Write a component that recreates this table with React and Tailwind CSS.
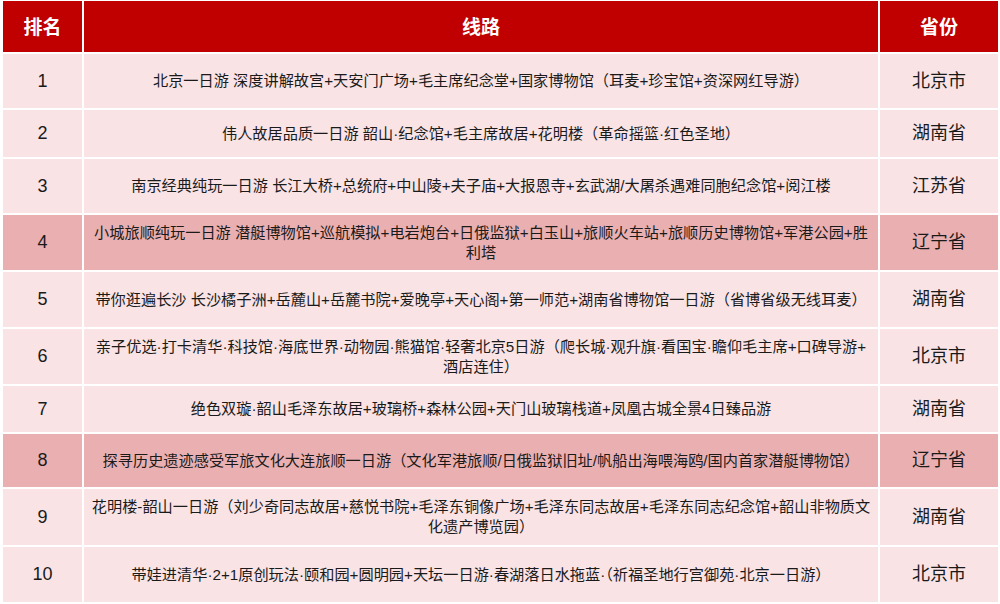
const rows = [
  { rank: 1, route: ['北京一日游 深度讲解故宫+天安门广场+毛主席纪念堂+国家博物馆（耳麦+珍宝馆+资深网红导游）'], province: '北京市', h: 'h-[54px]' },
  { rank: 2, route: ['伟人故居品质一日游 韶山·纪念馆+毛主席故居+花明楼（革命摇篮·红色圣地）'], province: '湖南省', h: 'h-[47px]' },
  { rank: 3, route: ['南京经典纯玩一日游 长江大桥+总统府+中山陵+夫子庙+大报恩寺+玄武湖/大屠杀遇难同胞纪念馆+阅江楼'], province: '江苏省', h: 'h-[54px]' },
  { rank: 4, route: ['小城旅顺纯玩一日游 潜艇博物馆+巡航模拟+电岩炮台+日俄监狱+白玉山+旅顺火车站+旅顺历史博物馆+军港公园+胜', '利塔'], province: '辽宁省', h: 'h-[55px]', hot: true },
  { rank: 5, route: ['带你逛遍长沙 长沙橘子洲+岳麓山+岳麓书院+爱晚亭+天心阁+第一师范+湖南省博物馆一日游（省博省级无线耳麦）'], province: '湖南省', h: 'h-[55px]' },
  { rank: 6, route: ['亲子优选·打卡清华·科技馆·海底世界·动物园·熊猫馆·轻奢北京5日游（爬长城·观升旗·看国宝·瞻仰毛主席+口碑导游+', '酒店连住）'], province: '北京市', h: 'h-[55px]' },
  { rank: 7, route: ['绝色双璇·韶山毛泽东故居+玻璃桥+森林公园+天门山玻璃栈道+凤凰古城全景4日臻品游'], province: '湖南省', h: 'h-[46px]' },
  { rank: 8, route: ['探寻历史遗迹感受军旅文化大连旅顺一日游（文化军港旅顺/日俄监狱旧址/帆船出海喂海鸥/国内首家潜艇博物馆）'], province: '辽宁省', h: 'h-[53px]', hot: true },
  { rank: 9, route: ['花明楼-韶山一日游（刘少奇同志故居+慈悦书院+毛泽东铜像广场+毛泽东同志故居+毛泽东同志纪念馆+韶山非物质文', '化遗产博览园）'], province: '湖南省', h: 'h-[56px]' },
  { rank: 10, route: ['带娃进清华·2+1原创玩法·颐和园+圆明园+天坛一日游·春湖落日水拖蓝·（祈福圣地行宫御苑·北京一日游）'], province: '北京市', h: 'h-[55px]' },
];

const font = "font-['Liberation_Sans','Noto_Sans_CJK_SC',sans-serif]";

export default function App() {
  return (
    <div className={`w-[1000px] h-[604px] overflow-hidden bg-white pl-[3px] pt-[1px] ${font}`}>
      <div className="grid w-[995px] grid-cols-[79px_794px_118px] gap-[2px]">
        <div className="flex h-[51px] items-center justify-center bg-[#c00000] pt-1 text-[19px] font-bold text-white">排名</div>
        <div className="flex h-[51px] items-center justify-center bg-[#c00000] pt-1 text-[19px] font-bold text-white">线路</div>
        <div className="flex h-[51px] items-center justify-center bg-[#c00000] pt-1 text-[19px] font-bold text-white">省份</div>
        {rows.map((row) => {
          const bg = row.hot ? 'bg-[#eab0b1]' : 'bg-[#f9e3e5]';
          return [
            <div key={`r${row.rank}`} className={`flex ${row.h} items-center justify-center ${bg} text-[18px] text-[#1a1a1a]`}>
              {row.rank}
            </div>,
            <div key={`t${row.rank}`} className={`flex ${row.h} flex-col items-center justify-center ${bg} px-2 text-center text-[15.2px] leading-[20px] text-[#1a1a1a]`}>
              {row.route.map((line) => (
                <span key={line} className="whitespace-nowrap">{line}</span>
              ))}
            </div>,
            <div key={`p${row.rank}`} className={`flex ${row.h} items-center justify-center ${bg} text-[18px] text-[#1a1a1a]`}>
              {row.province}
            </div>,
          ];
        })}
      </div>
    </div>
  );
}
